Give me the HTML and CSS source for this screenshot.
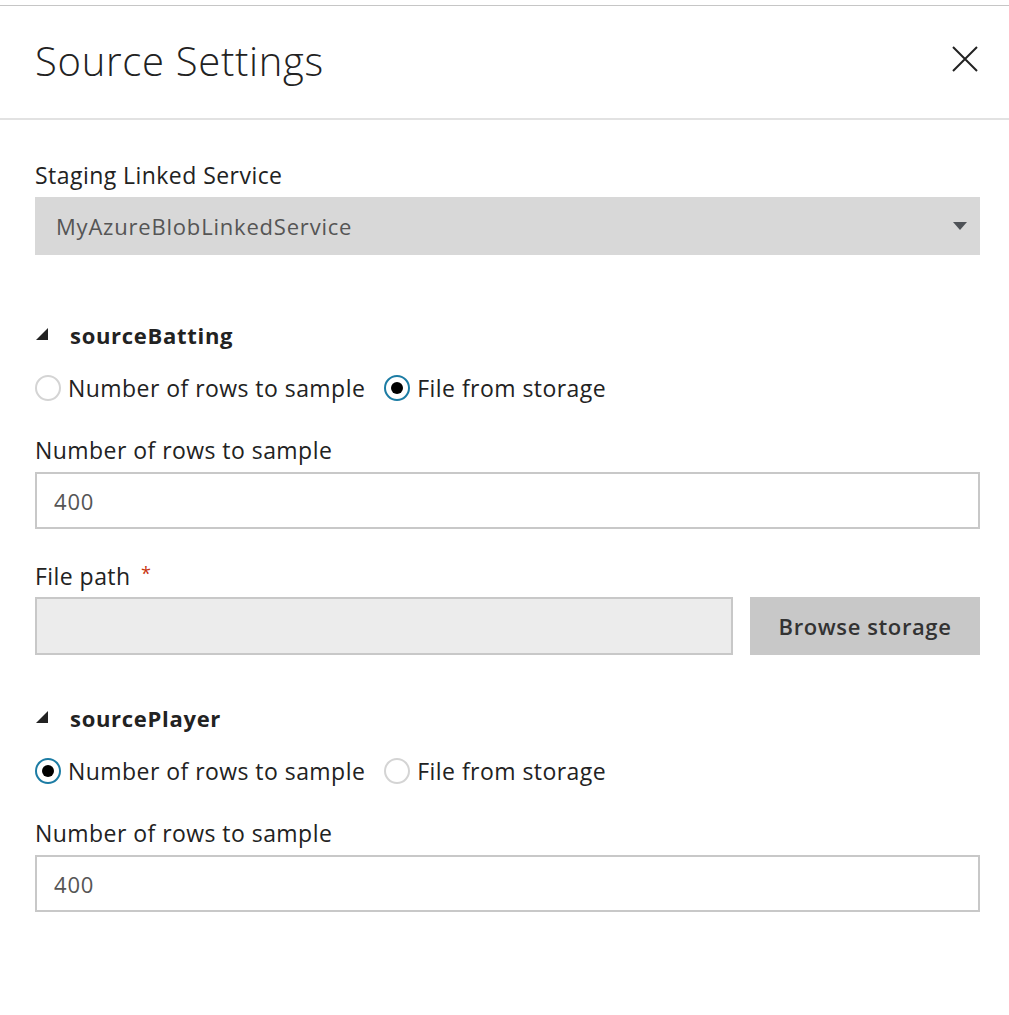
FILE: index.html
```html
<!DOCTYPE html>
<html>
<head>
<meta charset="utf-8">
<link rel="stylesheet" href="styles.css">
</head>
<body>
<div class="panel">
  <div class="header">
    <h1 class="title">Source Settings</h1>
    <svg class="close" width="26" height="26" viewBox="0 0 26 26"><path d="M1 1 L25 25 M25 1 L1 25" stroke="#222" stroke-width="2" fill="none"/></svg>
  </div>
  <div class="content">
    <div class="label">Staging Linked Service</div>
    <div class="dropdown">
      <span class="value">MyAzureBlobLinkedService</span>
      <svg width="14" height="8" viewBox="0 0 14 8"><polygon points="0,0 14,0 7,8" fill="#4f5257"/></svg>
    </div>

    <div class="section-head">
      <svg class="tri" width="12" height="12" viewBox="0 0 12 12"><polygon points="12,0 12,12 0,12" fill="#222"/></svg>
      <span>sourceBatting</span>
    </div>
    <div class="radios">
      <span class="radio"><span class="dot"></span>Number of rows to sample</span>
      <span class="radio on"><span class="dot"></span>File from storage</span>
    </div>
    <div class="label gap-label">Number of rows to sample</div>
    <div class="input"><span class="value">400</span></div>
    <div class="label gap-label">File path <span class="req">*</span></div>
    <div class="file-row">
      <div class="input disabled"></div>
      <div class="btn">Browse storage</div>
    </div>

    <div class="section-head second">
      <svg class="tri" width="12" height="12" viewBox="0 0 12 12"><polygon points="12,0 12,12 0,12" fill="#222"/></svg>
      <span>sourcePlayer</span>
    </div>
    <div class="radios">
      <span class="radio on"><span class="dot"></span>Number of rows to sample</span>
      <span class="radio"><span class="dot"></span>File from storage</span>
    </div>
    <div class="label gap-label">Number of rows to sample</div>
    <div class="input"><span class="value">400</span></div>
  </div>
</div>
</body>
</html>
```
FILE: styles.css
```css
html, body {
  margin: 0;
  padding: 0;
  background: #fff;
}
body {
  font-family: "Open Sans", "Noto Sans", sans-serif;
  color: #222;
}
.panel {
  margin-top: 5px;
  border-top: 1px solid #c6c6c6;
}
.header {
  height: 112px;
  display: flex;
  align-items: center;
  justify-content: space-between;
  padding: 0 31px 0 35px;
  border-bottom: 2px solid #e2e2e2;
}
.title {
  margin: 0;
  margin-top: -3px;
  font-weight: 300;
  font-size: 40px;
  color: #222;
  letter-spacing: 0.7px;
}
.close {
  margin-top: -6px;
}
.content {
  padding: 40px 29px 0 35px;
}
.label {
  font-size: 23px;
  line-height: 30px;
  height: 30px;
  color: #222;
  letter-spacing: 0.45px;
}
.gap-label {
  margin-top: 32px;
}
.req {
  color: #c8350f;
  font-size: 18px;
  vertical-align: top;
  position: relative;
  top: -3px;
  margin-left: 4px;
}
.dropdown {
  margin-top: 7px;
  height: 58px;
  background: #d8d8d8;
  display: flex;
  align-items: center;
  justify-content: space-between;
  padding: 0 13px 0 21px;
  box-sizing: border-box;
}
.value {
  font-size: 22px;
  color: #555;
  letter-spacing: 0.8px;
}
.section-head {
  margin-top: 65px;
  height: 30px;
  display: flex;
  align-items: center;
  font-size: 22px;
  font-weight: 700;
  letter-spacing: 0.7px;
}
.section-head.second {
  margin-top: 48px;
}
.tri {
  margin-left: 1px;
  margin-right: 22px;
  margin-top: -2px;
}
.radios {
  margin-top: 23px;
  height: 30px;
  display: flex;
  align-items: center;
  gap: 19px;
  font-size: 23px;
  letter-spacing: 0.45px;
}
.radio {
  display: flex;
  align-items: center;
}
.dot {
  width: 26px;
  height: 26px;
  border-radius: 50%;
  border: 2px solid #d4d4d4;
  box-sizing: border-box;
  margin-right: 7px;
  display: flex;
  align-items: center;
  justify-content: center;
}
.radio.on .dot {
  border-color: #1c7ca4;
}
.radio.on .dot::after {
  content: "";
  width: 12px;
  height: 12px;
  border-radius: 50%;
  background: #000;
}
.input {
  margin-top: 7px;
  height: 57px;
  border: 2px solid #c8c8c8;
  box-sizing: border-box;
  display: flex;
  align-items: center;
  padding-left: 17px;
  background: #fff;
}
.file-row {
  margin-top: 6px;
  display: flex;
  gap: 17px;
}
.file-row .input {
  margin-top: 0;
  flex: 1;
  height: 58px;
  background: #ececec;
}
.btn {
  width: 230px;
  height: 58px;
  background: #c8c8c8;
  display: flex;
  align-items: center;
  justify-content: center;
  font-size: 22px;
  font-weight: 600;
  color: #333;
  letter-spacing: 0.6px;
}
```
